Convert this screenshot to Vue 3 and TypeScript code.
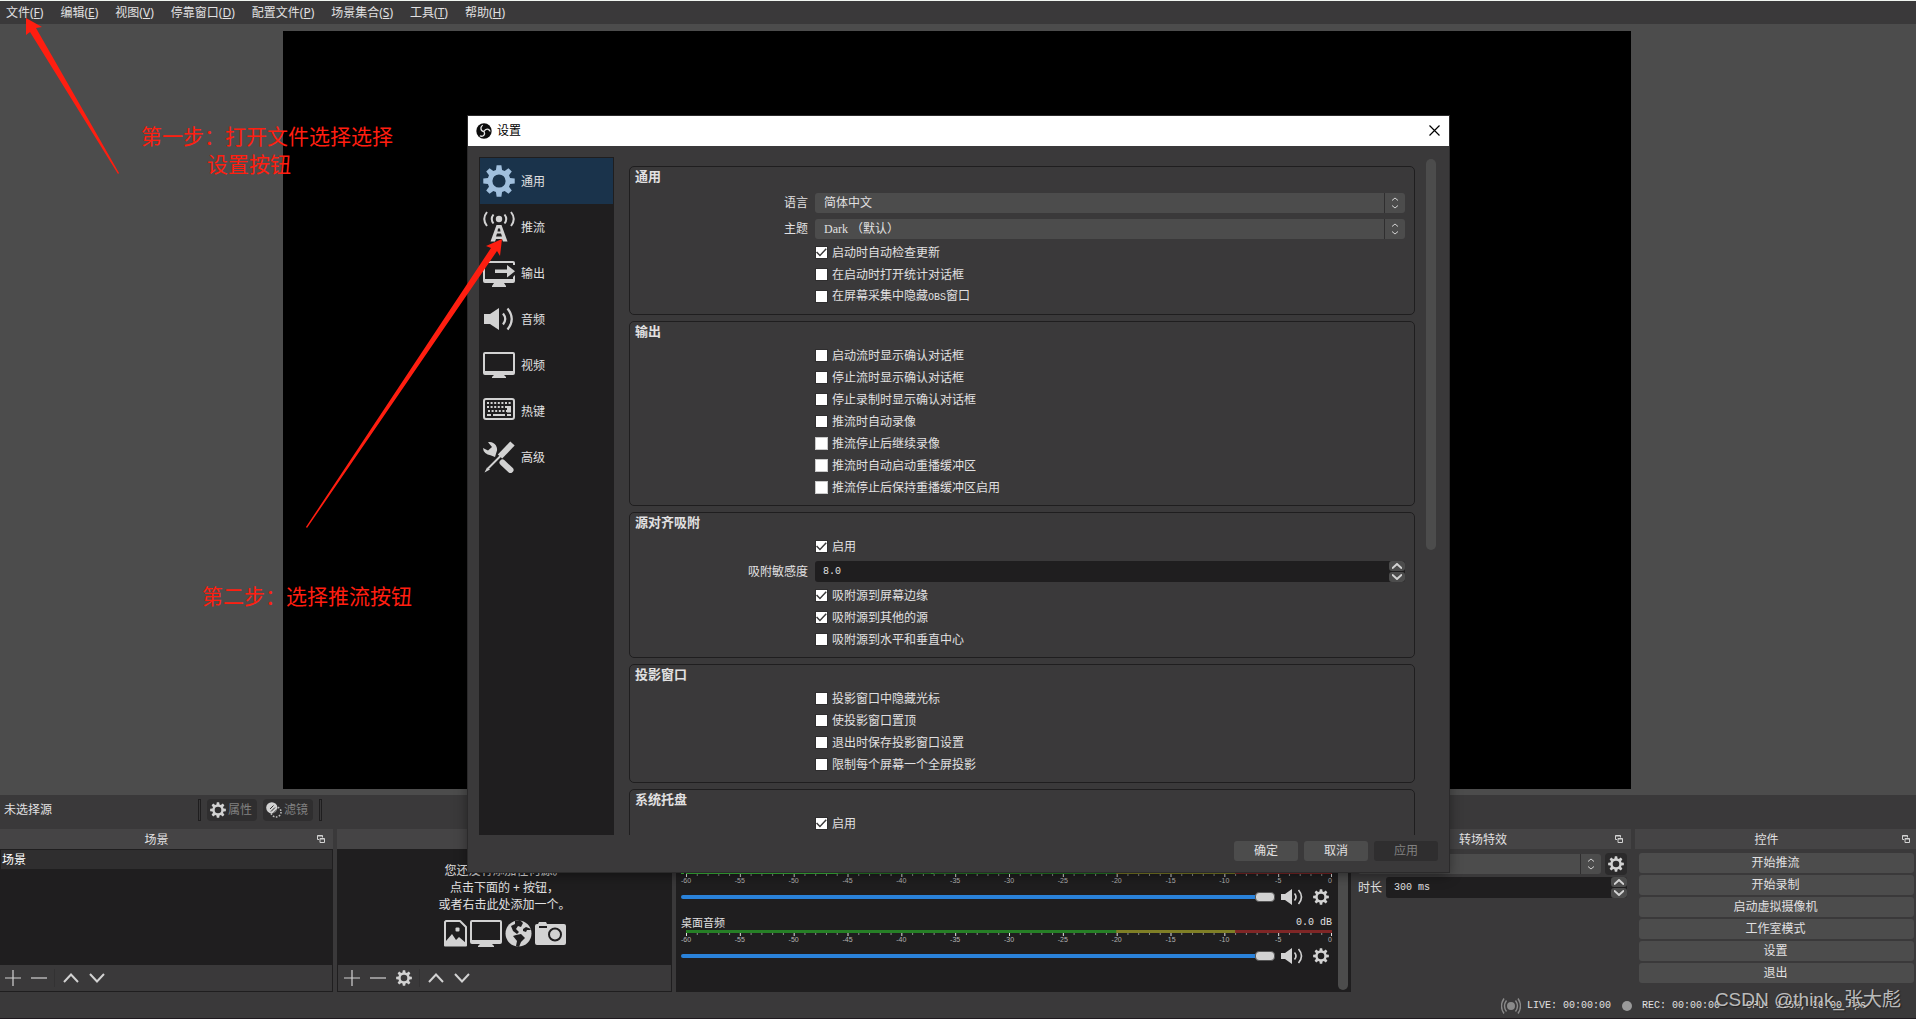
<script setup lang="ts">
import { ref } from 'vue'

interface MenuEntry { label: string; key: string }
interface Option { label: string; latin?: string; tail?: string; checked?: boolean; active?: boolean }
interface Channel { id: string; name: string; db: string; level: number; peak: number }

const menus: MenuEntry[] = [
  { label: '文件', key: 'F' },
  { label: '编辑', key: 'E' },
  { label: '视图', key: 'V' },
  { label: '停靠窗口', key: 'D' },
  { label: '配置文件', key: 'P' },
  { label: '场景集合', key: 'S' },
  { label: '工具', key: 'T' },
  { label: '帮助', key: 'H' },
]

const pages = ['通用', '推流', '输出', '音频', '视频', '热键', '高级']
const currentPage = ref(0)

const general: Option[] = [
  { label: '启动时自动检查更新', checked: true },
  { label: '在启动时打开统计对话框' },
  { label: '在屏幕采集中隐藏', latin: 'OBS', tail: '窗口' },
]
const output: Option[] = [
  { label: '启动流时显示确认对话框' },
  { label: '停止流时显示确认对话框' },
  { label: '停止录制时显示确认对话框' },
  { label: '推流时自动录像' },
  { label: '推流停止后继续录像', active: true },
  { label: '推流时自动启动重播缓冲区', active: true },
  { label: '推流停止后保持重播缓冲区启用', active: true },
]
const snapping: Option[] = [
  { label: '吸附源到屏幕边缘', checked: true },
  { label: '吸附源到其他的源', checked: true },
  { label: '吸附源到水平和垂直中心' },
]
const projector: Option[] = [
  { label: '投影窗口中隐藏光标' },
  { label: '使投影窗口置顶' },
  { label: '退出时保存投影窗口设置' },
  { label: '限制每个屏幕一个全屏投影' },
]
const enable: Option[] = [{ label: '启用', checked: true }]

const groups = [
  { title: '通用', kind: 'general', before: [] as Option[], options: general },
  { title: '输出', kind: 'plain', before: [] as Option[], options: output },
  { title: '源对齐吸附', kind: 'snap', before: enable, options: snapping },
  { title: '投影窗口', kind: 'plain', before: [] as Option[], options: projector },
  { title: '系统托盘', kind: 'plain', before: [] as Option[], options: enable },
]

const channels: Channel[] = [
  { id: 'mic', name: '', db: '', level: 23.5, peak: 37.9 },
  { id: 'desktop', name: '桌面音频', db: '0.0 dB', level: 0, peak: 0 },
]
const ticks = Array.from({ length: 61 }, (_, i) => ({
  db: i - 60,
  pos: (i / 60) * 100,
  major: i % 5 === 0,
}))

const controls = ['开始推流', '开始录制', '启动虚拟摄像机', '工作室模式', '设置', '退出']

/* Eight-toothed gear centred in a 32-unit box, with a round hole. */
function gear(hole: number): string {
  const pts: string[] = []
  for (let i = 0; i < 8; i++) {
    const base = (i * Math.PI) / 4
    const corners: [number, number][] = [[11.5, -0.27], [15.9, -0.15], [15.9, 0.15], [11.5, 0.27]]
    for (const [r, a] of corners) {
      pts.push(`${(16 + r * Math.sin(base + a)).toFixed(2)} ${(16 - r * Math.cos(base + a)).toFixed(2)}`)
    }
  }
  return `M${pts.join('L')}ZM${16 - hole} 16a${hole} ${hole} 0 1 0 ${hole * 2} 0a${hole} ${hole} 0 1 0 ${-hole * 2} 0Z`
}
const gearPath = gear(6.6)
</script>

<template>
  <div class="app">
    <nav class="menubar">
      <button v-for="m in menus" :key="m.key" type="button">{{ m.label }}(<u>{{ m.key }}</u>)</button>
    </nav>

    <main class="preview"><div class="canvas"></div></main>

    <section class="context">
      <span class="context-name">未选择源</span>
      <i class="grip"></i>
      <button type="button" class="tool" disabled>
        <svg class="i16" viewBox="0 0 32 32"><path :d="gearPath" fill="#d2d2d2" fill-rule="evenodd" /></svg>属性
      </button>
      <button type="button" class="tool" disabled>
        <svg class="i16" viewBox="0 0 16 16">
          <circle cx="10" cy="10" r="5" fill="none" stroke="#bdbdbd" stroke-width="1.6" stroke-dasharray="1.6 1.5" />
          <circle cx="5.8" cy="5.8" r="5.6" fill="#d2d2d2" />
          <path d="M5 9.5 9 5.5M7 11.5 11.2 7.3M4 7 7.5 3.5" stroke="#303030" stroke-width="1" />
        </svg>滤镜
      </button>
      <i class="grip"></i>
    </section>

    <section class="docks">
      <div class="dock scenes">
        <header><h2>场景</h2><svg class="float" viewBox="0 0 8 8"><path d="M.5 4.500V.5h5v2M.5 4.500H2M.5 1h5M3 3.500h4.500v4H3ZM3 4h4.500" fill="none" stroke="#d2d2d2" /></svg></header>
        <div class="list"><div class="scene">场景</div></div>
        <div class="toolbar">
          <button type="button" aria-label="+"><svg class="i16" viewBox="0 0 16 16"><path d="M8 0v16M0 8h16" /></svg></button>
          <button type="button" aria-label="-"><svg class="i16" viewBox="0 0 16 16"><path d="M0 8h16" /></svg></button>
          <i class="bar"></i>
          <button type="button" aria-label="up"><svg class="i16 bold" viewBox="0 0 16 16"><path d="M1 12l7-7.500 7 7.500" /></svg></button>
          <button type="button" aria-label="down"><svg class="i16 bold" viewBox="0 0 16 16"><path d="M1 4l7 7.500L15 4" /></svg></button>
        </div>
      </div>

      <div class="dock sources">
        <header></header>
        <div class="list empty">
          <p>您还没有添加任何源。<br />点击下面的 + 按钮，<br />或者右击此处添加一个。</p>
          <div class="kinds">
            <svg width="23" height="27" viewBox="0 0 23 27"><path d="M2 1h14l6 6v18.500H1V2Z" fill="none" stroke="#d2d2d2" stroke-width="2" stroke-linejoin="round" /><path d="M2 25v-4l6-7 4 6 3-3 7 6v2Z" fill="#d2d2d2" /><rect x="11.500" y="7.500" width="4" height="4" rx="1" fill="#d2d2d2" /></svg>
            <svg width="32" height="27" viewBox="0 0 32 27"><path d="M2 0h28a2 2 0 0 1 2 2v20a2 2 0 0 1-2 2h-8l2 2v1H8v-1l2-2H2a2 2 0 0 1-2-2V2a2 2 0 0 1 2-2ZM2 2v18h28V2Z" fill="#d2d2d2" fill-rule="evenodd" /></svg>
            <svg width="27" height="27" viewBox="0 0 27 27"><circle cx="13.500" cy="13.500" r="13" fill="#d2d2d2" /><path d="M10 1l5-1 3 3-2 4-3-1-2 3 3 3-2 2-4-3-2-5 4-2ZM11 15l5-1 4 4-4 4-2 5-3-1 1-5-4-5ZM18 9l3-2 5 2-1 1-3 0-1 2-3-1Z" fill="#1f1e1f" /></svg>
            <svg width="31" height="27" viewBox="0 0 31 27"><path d="M2 4h1l1-2h7l1 2h17a2 2 0 0 1 2 2v17a2 2 0 0 1-2 2H2a2 2 0 0 1-2-2V6a2 2 0 0 1 2-2Z" fill="#d2d2d2" /><path d="M4 7h8" stroke="#1f1e1f" stroke-width="2" /><circle cx="20" cy="14.500" r="6" fill="none" stroke="#1f1e1f" stroke-width="2" /></svg>
          </div>
        </div>
        <div class="toolbar">
          <button type="button" aria-label="+"><svg class="i16" viewBox="0 0 16 16"><path d="M8 0v16M0 8h16" /></svg></button>
          <button type="button" aria-label="-"><svg class="i16" viewBox="0 0 16 16"><path d="M0 8h16" /></svg></button>
          <button type="button" aria-label="gear"><svg class="i16" viewBox="0 0 32 32"><path :d="gearPath" class="solid" /></svg></button>
          <i class="bar"></i>
          <button type="button" aria-label="up"><svg class="i16 bold" viewBox="0 0 16 16"><path d="M1 12l7-7.500 7 7.500" /></svg></button>
          <button type="button" aria-label="down"><svg class="i16 bold" viewBox="0 0 16 16"><path d="M1 4l7 7.500L15 4" /></svg></button>
        </div>
      </div>

      <div class="dock">
        <header></header>
        <div class="mixer">
          <div class="channels">
            <div v-for="c in channels" :key="c.id" class="channel">
              <div class="channel-head"><span>{{ c.name }}</span><span class="mono">{{ c.db }}</span></div>
              <div class="meter">
                <svg class="meter-bar" aria-hidden="true">
                  <rect width="100%" height="3" fill="#267f26" />
                  <rect x="66.600%" width="33.400%" height="3" fill="#7f7f26" />
                  <rect x="85%" width="15%" height="3" fill="#7f2626" />
                  <rect v-if="c.level" :width="c.level + '%'" height="3" fill="#3dc03d" />
                  <rect v-if="c.level" x="-5" width="3" height="3" fill="#3dc03d" />
                  <rect v-if="c.peak" :x="c.peak + '%'" width="3" height="3" fill="#3dc03d" />
                </svg>
                <svg class="scale">
                  <template v-for="t in ticks" :key="t.db">
                    <rect :x="t.pos + '%'" width="1" :height="t.major ? 3 : 2" :fill="t.major ? '#e1e0e1' : '#8a8a8a'" :transform="t.db === 0 ? 'translate(-1 0)' : undefined" />
                    <text v-if="t.major" :x="t.pos + '%'" y="9" :text-anchor="t.db === 0 ? 'end' : 'middle'">{{ t.db }}</text>
                  </template>
                </svg>
              </div>
              <div class="volume">
                <input type="range" min="0" max="100" value="100" :aria-label="c.id" />
                <button type="button" aria-label="mute">
                  <svg width="22" height="16" viewBox="0 0 22 16"><path d="M0 5h4l7-5v16l-7-5H0Z" fill="#d2d2d2" /><path d="M13.500 4.500q3 3.500 0 7M17.500 1q6 7 0 14" fill="none" stroke="#d2d2d2" stroke-width="1.600" /></svg>
                </button>
                <button type="button" aria-label="options"><svg class="i16" viewBox="0 0 32 32"><path :d="gearPath" class="solid" /></svg></button>
              </div>
            </div>
          </div>
          <div class="mixer-scroll"></div>
        </div>
      </div>

      <div class="dock">
        <header><h2>转场特效</h2><svg class="float" viewBox="0 0 8 8"><path d="M.5 4.500V.5h5v2M.5 4.500H2M.5 1h5M3 3.500h4.500v4H3ZM3 4h4.500" fill="none" stroke="#d2d2d2" /></svg></header>
        <div class="transitions">
          <div class="trow">
            <div class="combo"><select aria-label="转场特效"></select><span class="combo-arrow"><svg width="6" height="12" viewBox="0 0 6 12"><path d="M0 3.500 3 1l3 2.500M0 8.500 3 11l3-2.500" /></svg></span></div>
            <button type="button" class="square" aria-label="options"><svg class="i16" viewBox="0 0 32 32"><path :d="gearPath" class="solid" /></svg></button>
          </div>
          <div class="trow">
            <label for="duration">时长</label>
            <div class="spin">
              <input id="duration" type="text" value="300 ms" />
              <span class="spin-buttons">
                <button type="button" aria-label="+"><svg width="10" height="6" viewBox="0 0 10 6"><path d="M0 5.500 5 1l5 4.500" /></svg></button>
                <button type="button" aria-label="-"><svg width="10" height="6" viewBox="0 0 10 6"><path d="M0 .5 5 5l5-4.500" /></svg></button>
              </span>
            </div>
          </div>
        </div>
      </div>

      <div class="dock last">
        <header><h2>控件</h2><svg class="float" viewBox="0 0 8 8"><path d="M.5 4.500V.5h5v2M.5 4.500H2M.5 1h5M3 3.500h4.500v4H3ZM3 4h4.500" fill="none" stroke="#d2d2d2" /></svg></header>
        <div class="controls">
          <button v-for="c in controls" :key="c" type="button">{{ c }}</button>
        </div>
      </div>
    </section>

    <footer class="status mono">
      <svg width="20" height="16" viewBox="0 0 20 16"><circle cx="10" cy="8" r="4" fill="#8a8a8a" /><path d="M5.500 2.500q-4 5.500 0 11M14.500 2.500q4 5.500 0 11M3 .5q-5 7.500 0 15M17 .5q5 7.500 0 15" fill="none" stroke="#8a8a8a" stroke-width="1.400" /></svg>
      <span class="live">LIVE: 00:00:00</span>
      <i class="dot"></i>
      <span class="rec">REC: 00:00:00</span>
      <span class="cpu">CPU: 1.5%, 30.00 fps</span>
    </footer>

    <div class="dialog" role="dialog" aria-labelledby="dialog-title">
      <div class="titlebar">
        <svg width="16" height="16" viewBox="0 0 16 16"><circle cx="8" cy="8" r="7.700" fill="#0c0c0c" /><g fill="none" stroke="#e8e8e8" stroke-width="1.300"><path d="M8 8.500Q4.500 8 5 4.500Q5.300 3 6.800 2.200" /><path d="M8 8.500Q9.500 5.500 12.300 6.300Q13.800 7 14 8.500" /><path d="M8 8.500Q9.500 11.500 7 13Q5.500 13.600 3.800 12.700" /></g></svg>
        <span id="dialog-title">设置</span>
        <button type="button" class="close" aria-label="close"><svg width="11" height="11" viewBox="0 0 11 11"><path d="M.5.5l10 10M10.500.5l-10 10" stroke="#000" stroke-width="1.200" /></svg></button>
      </div>
      <div class="dialog-main">
        <div class="pages">
          <button v-for="(p, i) in pages" :key="p" type="button" :class="{ current: i === currentPage }" @click="currentPage = i">
            <svg width="32" height="32" viewBox="0 0 32 32">
              <path v-if="i === 0" :d="gearPath" fill-rule="evenodd" />
              <g v-else-if="i === 1">
                <circle cx="16" cy="8" r="3.200" />
                <path d="M10.500 3.500q-3.500 4.500 0 9M21.500 3.500q3.500 4.500 0 9M4 1q-5.500 7 0 14M28 1q5.500 7 0 14" fill="none" stroke="currentColor" stroke-width="2" />
                <path d="M13.500 14h5l6 16.500h-4.500l-1-2.500h-6l-1 2.500H7.500ZM15 17.500 14.500 20.500h3L17 17.500ZM14 22.500 13 25.500h6L18 22.500Z" fill-rule="evenodd" />
              </g>
              <path v-else-if="i === 2" d="M2 4h28a2 2 0 0 1 2 2v2h-2V6H2v16h28v-2l2-2v6a2 2 0 0 1-2 2H21l2 3v1H9v-1l2-3H2a2 2 0 0 1-2-2V6a2 2 0 0 1 2-2ZM12 12.500h12v-4.500l8 6.300-8 6.300V16H12Z" />
              <g v-else-if="i === 3"><path d="M1 11h6l9-6v22l-9-6H1Z" /><path d="M20 10.500q4.500 5.500 0 11M24.500 5.500q8.500 10.500 0 21" fill="none" stroke="currentColor" stroke-width="2.200" /></g>
              <path v-else-if="i === 4" d="M2 3h28a2 2 0 0 1 2 2v19a2 2 0 0 1-2 2H21l2 2v1H9v-1l2-2H2a2 2 0 0 1-2-2V5a2 2 0 0 1 2-2ZM2 5v17h28V5Z" fill-rule="evenodd" />
              <g v-else-if="i === 5" fill="none" stroke="currentColor">
                <rect x="1" y="4" width="30" height="20" rx="2" stroke-width="2" />
                <path d="M4 8h24" stroke-width="2" stroke-dasharray="2 1.600" />
                <path d="M4 12h20M5 16h19" stroke-width="2" stroke-dasharray="2 1.600" />
                <path d="M4 20h4M10 20h12M24 20h4" stroke-width="2" />
                <path d="M26 11v6.500" stroke-width="4" />
              </g>
              <g v-else>
                <path d="M5 1.200A7.500 7.500 0 0 1 14 9.500L12 16 7.500 14.200A7.500 7.500 0 0 1 0 7L5 9.500 9 6Z" />
                <path d="M19.500 21.500 27.500 29" stroke="currentColor" stroke-width="6" stroke-linecap="round" />
                <path d="M29.500 2.500 17 15.500" stroke="currentColor" stroke-width="6" />
                <path d="M18 14.500 5 27.500" stroke="currentColor" stroke-width="2" /><path d="M1.500 31.500 4 26.500 7 28.500Z" />
              </g>
            </svg><span>{{ p }}</span>
          </button>
        </div>
        <div class="scroll">
          <div class="groups">
            <fieldset v-for="g in groups" :key="g.title">
              <legend>{{ g.title }}</legend>
              <template v-if="g.kind === 'general'">
                <div class="field">
                  <label for="language">语言</label>
                  <div class="combo"><select id="language"><option>简体中文</option></select><span class="combo-arrow"><svg width="6" height="12" viewBox="0 0 6 12"><path d="M0 3.500 3 1l3 2.500M0 8.500 3 11l3-2.500" /></svg></span></div>
                </div>
                <div class="field">
                  <label for="theme">主题</label>
                  <div class="combo"><select id="theme"><option>Dark （默认）</option></select><span class="combo-arrow"><svg width="6" height="12" viewBox="0 0 6 12"><path d="M0 3.500 3 1l3 2.500M0 8.500 3 11l3-2.500" /></svg></span></div>
                </div>
              </template>
              <label v-for="o in g.before" :key="o.label" class="check"><input type="checkbox" :checked="o.checked" />{{ o.label }}</label>
              <div v-if="g.kind === 'snap'" class="field">
                <label for="sensitivity">吸附敏感度</label>
                <div class="spin">
                  <input id="sensitivity" type="text" value="8.0" />
                  <span class="spin-buttons">
                    <button type="button" aria-label="+"><svg width="10" height="6" viewBox="0 0 10 6"><path d="M0 5.500 5 1l5 4.500" /></svg></button>
                    <button type="button" aria-label="-"><svg width="10" height="6" viewBox="0 0 10 6"><path d="M0 .5 5 5l5-4.500" /></svg></button>
                  </span>
                </div>
              </div>
              <label v-for="o in g.options" :key="o.label" class="check" :class="{ active: o.active }"><input type="checkbox" :checked="o.checked" /><span>{{ o.label }}<span v-if="o.latin" class="mono">{{ o.latin }}</span>{{ o.tail }}</span></label>
            </fieldset>
          </div>
          <div class="scrollbar"></div>
        </div>
      </div>
      <div class="actions">
        <button type="button">确定</button>
        <button type="button">取消</button>
        <button type="button" disabled>应用</button>
      </div>
    </div>

    <svg class="arrows" aria-hidden="true">
      <path d="M26 18 42 27 36 28 119 173 118 174 30 32 26 35Z" />
      <path d="M502 239 500 256 497 251 307 528 306 527 491 248 486 246Z" />
    </svg>
    <p class="note first">第一步：打开文件选择选择<span>设置按钮</span></p>
    <p class="note second">第二步：选择推流按钮</p>
    <p class="watermark">CSDN @think_张大彪</p>
  </div>
</template>

<style>
body {
  margin: 0;
  background: #3a393a;
}
</style>

<style scoped>
.app {
  position: relative;
  box-sizing: border-box;
  display: flex;
  flex-direction: column;
  min-height: 100vh;
  overflow: hidden;
  border-top: 1px solid #f0f5f0;
  border-bottom: 1px solid #1f1a1f;
  background: #3a393a;
  color: #e1e0e1;
  font: 12px/20px "Noto Sans", "Noto Sans CJK SC", sans-serif;
}
button, input, select {
  margin: 0;
  padding: 0;
  border: 0;
  background: none;
  color: inherit;
  font: inherit;
}
h2, p { margin: 0; font-size: 12px; font-weight: 400; }
svg { display: block; flex: none; }
.mono { font-family: "Liberation Mono", monospace; font-size: 10px; }
.i16 { width: 16px; height: 16px; }
.solid { fill: #d2d2d2; stroke: none; fill-rule: evenodd; }

.menubar { display: flex; height: 23px; padding-left: 6px; gap: 17px; }
.menubar button { line-height: 23px; white-space: nowrap; }
.preview {
  display: flex;
  flex: 1;
  min-height: 0;
  justify-content: center;
  padding: 7px 2px 6px 0;
  background: #4c4c4c;
}
.canvas { width: 70.4%; background: #000; }

.context { display: flex; height: 22px; padding: 4px 4px 8px; gap: 6px; }
.context-name { width: 188px; line-height: 22px; }
.grip { width: 1px; border: 1px solid #1f1e1f; }
.tool {
  display: flex;
  align-items: center;
  gap: 2px;
  width: 50px;
  padding-left: 3px;
  border-radius: 4px;
  background: #2f2e2f;
  color: #808080;
  white-space: nowrap;
}

.docks {
  display: grid;
  grid-template-columns: 333fr 335fr 675fr 276fr 281fr;
  gap: 4px;
}
.dock { display: flex; flex-direction: column; min-width: 0; }
.dock header { display: flex; align-items: center; height: 20px; padding-right: 7px; background: #454445; }
.dock h2 { flex: 1; padding-right: 3px; line-height: 21px; text-align: center; }
.last header { padding-right: 5px; }
.float { width: 10px; height: 8px; }
.list { flex: 1; padding: 1px; background: #1f1e1f; }
.scene { height: 19px; padding-left: 1px; background: #2f2e2f; color: #fff; line-height: 19px; }
.empty { display: flex; flex-direction: column; align-items: center; justify-content: flex-end; }
.empty p { line-height: 17px; text-align: center; }
.kinds { display: flex; gap: 3px; margin: 7px 0 17px; }
.toolbar { display: flex; align-items: center; height: 26px; border: 1px solid #1f1e1f; border-top: 0; }
.scenes .toolbar { border-left: 0; }
.sources .toolbar { padding-left: 1px; }
.toolbar button { display: grid; place-items: center; width: 26px; height: 26px; }
.toolbar svg { fill: none; stroke: #d2d2d2; stroke-width: 1.2; }
.toolbar .bold { stroke-width: 2; }
.bar { width: 1px; height: 18px; margin: 0 3px 0 2px; background: #333233; }

.mixer { display: flex; flex: 1; padding: 6px 3px 2px 5px; background: #1f1e1f; }
.channels { flex: 1; margin-right: 6px; }
.channel { height: 59px; }
.channel-head { display: flex; justify-content: space-between; height: 16px; font-size: 11px; line-height: 17px; }
.meter { margin-left: 5px; }
.meter-bar { width: 100%; height: 3px; overflow: visible; }
.scale { width: 100%; height: 10px; overflow: visible; }
.scale text { fill: #b4b4b4; font: 7px "Liberation Sans", sans-serif; }
.volume { display: flex; align-items: center; height: 25px; padding-right: 3px; }
.volume input { flex: 1; height: 10px; margin-right: 6px; appearance: none; }
.volume button + button { margin-left: 10px; }
.volume input::-webkit-slider-runnable-track { height: 4px; border-radius: 2px; background: #2a82da; }
.volume input::-webkit-slider-thumb { width: 20px; height: 10px; margin-top: -3px; border: 1px solid #555; border-radius: 4px; background: #d2d2d2; appearance: none; }
.mixer-scroll { width: 10px; border-radius: 5px; background: #4c4c4c; }

.transitions { padding: 4px 4px 0 3px; }
.trow { display: flex; align-items: center; gap: 4px; margin-bottom: 2px; }
.square { display: grid; place-items: center; width: 22px; height: 22px; border-radius: 4px; background: #2b2a2b; }
.combo { display: flex; flex: 1; height: 20px; overflow: hidden; border-radius: 3px; background: #4c4c4c; }
.combo select { flex: 1; min-width: 0; padding-left: 9px; appearance: none; font-family: "Liberation Serif", "Noto Sans CJK SC", serif; }
.combo option { background: #4c4c4c; }
.combo-arrow { display: grid; place-items: center; width: 20px; border-left: 1px solid #2f2e2f; }
.combo-arrow svg, .spin svg { fill: none; stroke: #d2d2d2; }
.spin { display: flex; flex: 1; height: 21px; overflow: hidden; border-radius: 3px; background: #1f1e1f; }
.spin input { flex: 1; min-width: 0; padding-left: 8px; font: 10px "Liberation Mono", monospace; }
.spin-buttons { display: flex; flex-direction: column; gap: 1px; }
.spin-buttons button { display: grid; place-items: center; width: 16px; height: 10px; border-radius: 3px; background: #4c4c4c; }
.spin svg { stroke-width: 2; }

.controls { display: flex; flex-direction: column; gap: 2px; padding: 4px 2px 9px 4px; }
.controls button, .actions button { height: 20px; border-radius: 3px; background: #4c4c4c; }
.controls button { padding-right: 2px; }

.status { display: flex; align-items: center; justify-content: flex-end; height: 24px; padding: 2px 50px 0 0; }
.live { margin-left: 6px; }
.dot { width: 10px; height: 10px; margin: 0 10px 0 11px; border-radius: 50%; background: #9a9a9a; }
.cpu { margin-left: 26px; }

.dialog {
  position: absolute;
  top: 115px;
  bottom: 146px;
  left: 50%;
  display: flex;
  flex-direction: column;
  width: 981px;
  margin-left: -490px;
  background: #3a393a;
  box-shadow: 0 0 0 1px #2b2a2b, 0 3px 12px rgba(0, 0, 0, 0.45);
}
.titlebar { display: flex; align-items: center; height: 29px; padding: 0 9px 1px 8px; background: #fff; color: #000; }
.titlebar span { flex: 1; margin-left: 5px; }
.dialog-main { display: flex; flex: 1; min-height: 0; gap: 15px; padding: 11px 13px 0 11px; }
.pages { box-sizing: border-box; width: 135px; padding: 1px; background: #1f1e1f; }
.pages button { display: flex; align-items: center; gap: 6px; width: 100%; height: 46px; padding-left: 3px; }
.pages span { padding-top: 2px; }
.pages svg { color: #d2d2d2; fill: currentColor; }
.pages .current { background: #1a334b; }
.pages .current svg { color: #a0bfdd; }
.scroll { display: flex; flex: 1; overflow: hidden; padding-top: 2px; gap: 11px; }
.groups { flex: 1; padding-top: 7px; }
fieldset { min-width: 0; margin: 0 0 6px; padding: 0 9px 6px; border: 1px solid #1f1e1f; border-radius: 5px; }
legend { float: left; width: 100%; height: 23px; margin-left: -4px; padding: 0; font-size: 13px; font-weight: 700; line-height: 18px; }
.field { display: flex; align-items: center; clear: both; margin: 3px 0; }
legend + .field { padding-top: 3px; }
.field + .field { margin-top: 6px; }
.field > label { width: 169px; margin-right: 7px; text-align: right; }
.check { display: flex; align-items: center; clear: both; width: max-content; height: 22px; margin-left: 176px; }
.check input { box-sizing: border-box; width: 13px; height: 13px; margin: 0 4px 1px 0; border: 1px solid #2f2e2f; background: #fff; appearance: none; }
.check.active input { border-color: #c8c8c8; }
.check input:checked::before {
  display: block;
  width: 11px;
  height: 11px;
  background: #3a393a;
  clip-path: polygon(0 50%, 10% 42%, 36% 68%, 88% 12%, 98% 20%, 36% 86%);
  content: "";
}
.scrollbar { width: 10px; height: 391px; border-radius: 5px; background: #4c4c4c; }
.actions { display: flex; justify-content: flex-end; gap: 6px; padding: 6px 11px 11px; }
.actions button { width: 64px; }
.actions button:disabled { background: #2f2e2f; color: #808080; }

.arrows { position: absolute; inset: -1px 0 0; width: 100%; height: 100%; fill: #ff1e10; pointer-events: none; }
.note { position: absolute; color: #ff1e10; font-size: 21px; line-height: 28px; text-align: center; white-space: nowrap; }
.note span { display: block; padding-right: 36px; }
.first { top: 121px; left: 141px; }
.second { top: 581px; left: 202px; }
.watermark {
  position: absolute;
  right: 15px;
  bottom: 4px;
  color: rgba(225, 225, 225, 0.8);
  font: 19px/28px "Liberation Sans", "Noto Sans CJK SC", sans-serif;
  text-shadow: 1px 1px 1px #222;
}
</style>
